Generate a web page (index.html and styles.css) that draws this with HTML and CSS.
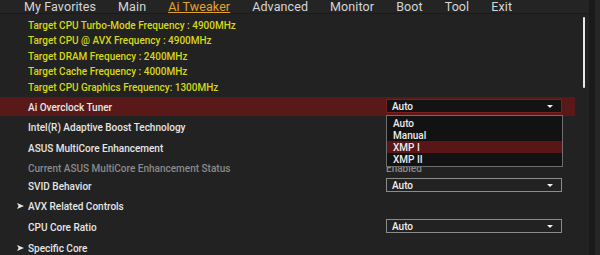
FILE: index.html
```html
<!DOCTYPE html>
<html lang="en">
	<head>
		<meta charset="UTF-8" />
		<meta name="viewport" content="width=device-width, initial-scale=1.0" />
		<title>Ai Tweaker</title>
		<link rel="stylesheet" href="styles.css">
	</head>
	<body>
		<div class="screen">
			<div class="main">
				<nav class="tabs">
					<span class="tab">My Favorites</span>
					<span class="tab">Main</span>
					<span class="tab active">Ai Tweaker</span>
					<span class="tab">Advanced</span>
					<span class="tab">Monitor</span>
					<span class="tab">Boot</span>
					<span class="tab">Tool</span>
					<span class="tab">Exit</span>
				</nav>

				<div class="body">
					<div class="list">
						<div class="info">
							<div class="info-line">Target CPU Turbo-Mode Frequency : 4900MHz</div>
							<div class="info-line">Target CPU @ AVX Frequency : 4900MHz</div>
							<div class="info-line">Target DRAM Frequency : 2400MHz</div>
							<div class="info-line">Target Cache Frequency : 4000MHz</div>
							<div class="info-line">Target CPU Graphics Frequency: 1300MHz</div>
						</div>

						<div class="row selected tight">
							<div class="label">Ai Overclock Tuner</div>
							<div class="select focus">
								<span>Auto</span>
								<span class="caret"></span>
								<div class="options">
									<div class="option">Auto</div>
									<div class="option">Manual</div>
									<div class="option current">XMP I</div>
									<div class="option">XMP II</div>
								</div>
							</div>
						</div>

						<div class="row">
							<div class="label">Intel(R) Adaptive Boost Technology</div>
						</div>

						<div class="row">
							<div class="label">ASUS MultiCore Enhancement</div>
						</div>

						<div class="row status">
							<div class="label muted">Current ASUS MultiCore Enhancement Status</div>
							<div class="value muted">Enabled</div>
						</div>

						<div class="row tight">
							<div class="label">SVID Behavior</div>
							<div class="select">
								<span>Auto</span>
								<span class="caret"></span>
							</div>
						</div>

						<div class="row">
							<div class="label">
								<svg class="arrow" width="7" height="6" viewBox="0 0 7 6"><path d="M0 0 L7 3 L0 6 L1.6 3 Z" fill="#e6e6e6"/></svg>
								AVX Related Controls
							</div>
						</div>

						<div class="row">
							<div class="label">CPU Core Ratio</div>
							<div class="select">
								<span>Auto</span>
								<span class="caret"></span>
							</div>
						</div>

						<div class="row">
							<div class="label">
								<svg class="arrow" width="7" height="6" viewBox="0 0 7 6"><path d="M0 0 L7 3 L0 6 L1.6 3 Z" fill="#e6e6e6"/></svg>
								Specific Core
							</div>
						</div>
					</div>

					<div class="scroll">
						<div class="thumb"></div>
					</div>
				</div>
			</div>
			<div class="edge"></div>
		</div>
	</body>
</html>
```

FILE: styles.css
```css
html,
body {
	margin: 0;
	padding: 0;
	background-color: #222222;
	font-family: Roboto, "Liberation Sans", sans-serif;
}
.screen {
	display: flex;
	width: 600px;
	height: 255px;
	overflow: hidden;
}
.main {
	width: 589px;
	display: flex;
	flex-direction: column;
}
.edge {
	flex: 1;
	background: #262626;
	border-left: 6px solid #1a1a1a;
}

.tabs {
	display: flex;
	gap: 22px;
	height: 13px;
	padding-left: 24px;
	background: #242424;
	border-bottom: 1px solid #1a1a1a;
	font-size: 12.5px;
	line-height: 13px;
	color: #d6d6d6;
	letter-spacing: 0.1px;
}
.tab {
	white-space: nowrap;
}
.tab.active {
	color: #e2a52a;
	text-decoration: underline;
	text-decoration-thickness: 1px;
	text-underline-offset: 1px;
}

.body {
	display: flex;
	flex: 1;
}
.list {
	width: 575px;
}
.scroll {
	flex: 1;
	padding-top: 3px;
}
.thumb {
	width: 2px;
	height: 71px;
	margin-left: 8px;
	background: #e8e8e8;
	border-radius: 1px;
}

.info {
	padding: 3.5px 0 1.5px 28px;
}
.info-line {
	height: 15.6px;
	line-height: 15.6px;
	font-size: 10px;
	font-weight: 500;
	color: #d6d814;
	white-space: nowrap;
}

.row {
	display: flex;
	align-items: center;
	height: 21px;
	padding-left: 28px;
	font-size: 10px;
	font-weight: 500;
	color: #e6e6e6;
}
.row.tight {
	height: 19px;
}
.row.status {
	height: 18px;
}
.row.selected {
	background: #5a1919;
}
.label {
	position: relative;
	width: 358px;
	flex-shrink: 0;
	padding-top: 3px;
	white-space: nowrap;
}
.value {
	padding-top: 3px;
}
.arrow {
	position: absolute;
	left: -11px;
	top: 5px;
}
.muted {
	color: #8a8a8a;
}

.select {
	position: relative;
	display: flex;
	align-items: center;
	justify-content: space-between;
	box-sizing: border-box;
	width: 176px;
	height: 14px;
	padding: 1px 8px 0 5px;
	border: 1px solid #8c8c8c;
	background: #222222;
	color: #f0f0f0;
	font-size: 10px;
}
.select.focus {
	background: #131313;
	border-color: #7a1f1f;
}
.caret {
	width: 0;
	height: 0;
	border-left: 3px solid transparent;
	border-right: 3px solid transparent;
	border-top: 3px solid #f0f0f0;
}

.options {
	position: absolute;
	left: -1px;
	top: 15px;
	z-index: 2;
	box-sizing: border-box;
	width: 177px;
	padding: 1px 0;
	background: #121212;
	border: 1px solid #6e6e6e;
}
.option {
	height: 12px;
	line-height: 12px;
	padding: 1px 0 0 6px;
	box-sizing: border-box;
	color: #ececec;
}
.option.current {
	background: #5a1616;
}
```
